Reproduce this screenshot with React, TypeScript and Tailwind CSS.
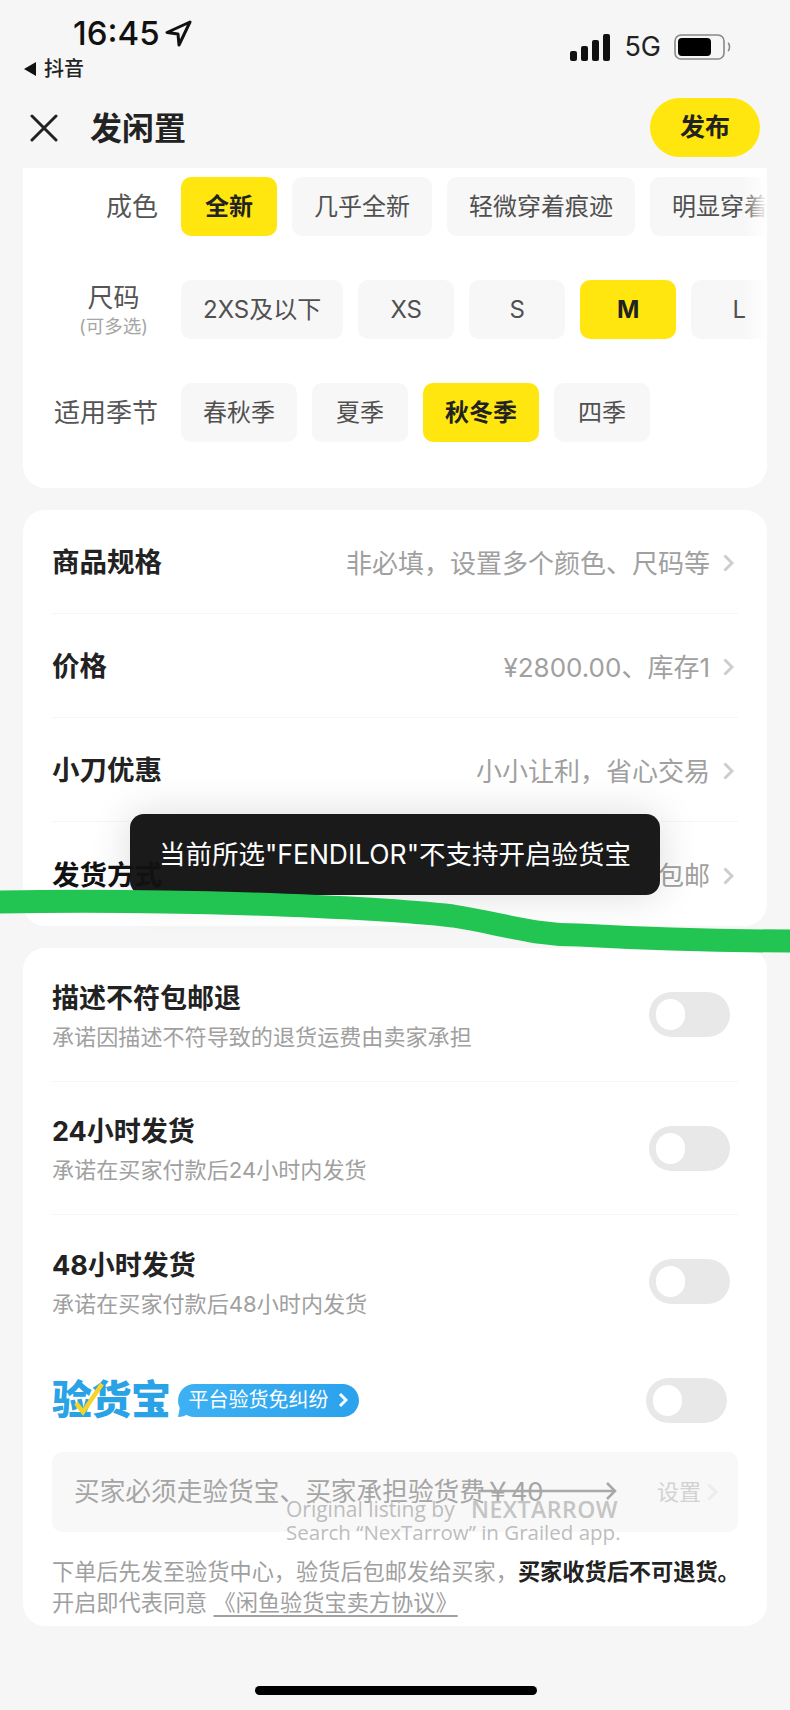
const cjk = "font-['Inter','Noto_Sans_CJK_SC',sans-serif]";

const Chip = ({ label, active }: { label: string; active?: boolean }) => (
	<div
		className={`h-[59px] min-w-[96px] px-[22px] shrink-0 rounded-[10px] flex items-center justify-center text-[24px] ${
			active ? "bg-[#ffe60f] text-[#222] font-bold" : "bg-[#f7f7f7] text-[#505050]"
		}`}
	>
		{label}
	</div>
);

const Chevron = ({ className = "stroke-[#cdcdcd]" }: { className?: string }) => (
	<svg width="11" height="18" viewBox="0 0 11 18" fill="none" className={`shrink-0 ${className}`} strokeWidth="3">
		<path d="M1.5 1.5l7.5 7.5-7.5 7.5" />
	</svg>
);

const SpecRow = ({ title, value, last }: { title: string; value: string; last?: boolean }) => (
	<div className={`h-[104px] pt-[3px] flex items-center justify-between ${last ? "" : "border-b border-[#f6f6f6]"}`}>
		<span className={`text-[27.5px] font-bold ${last ? "relative z-10 text-[#111]" : "text-[#222]"}`}>{title}</span>
		<span className="flex items-center gap-[13px] text-[26px] text-[#a0a0a0] pr-[4px]">
			{value}
			<Chevron />
		</span>
	</div>
);

const Toggle = () => (
	<div className="w-[81px] h-[45px] rounded-full bg-[#e8e8e8] flex items-center pl-[7px] shrink-0">
		<div className="w-[29px] h-[31px] rounded-full bg-white" />
	</div>
);

const PromiseRow = ({ title, sub, first, last }: { title: string; sub: string; first?: boolean; last?: boolean }) => (
	<div
		className={`flex items-center justify-between pr-[8px] ${first ? "h-[134px]" : "h-[133px]"} ${
			last ? "" : "border-b border-[#f6f6f6]"
		}`}
	>
		<div className="flex flex-col gap-[7px] pt-[5px]">
			<span className="text-[27px] leading-[32px] font-bold text-[#222]">{title}</span>
			<span className="text-[22.1px] leading-[30px] text-[#a0a0a0]">{sub}</span>
		</div>
		<Toggle />
	</div>
);

const Fade = () => <div className="absolute right-0 top-0 h-full w-[24px] bg-gradient-to-r from-white/0 to-white" />;

export default function App() {
	return (
		<div className={`relative w-[790px] h-[1710px] overflow-hidden bg-[#f6f6f6] ${cjk}`}>
			{/* status bar */}
			<div className="h-[98px] flex justify-between pl-[24px] pr-[58px] pt-[14px]">
				<div>
					<div className="flex items-center gap-[5px] pl-[49px] h-[38px]">
						<span className="text-[33px] leading-[38px] font-medium text-[#111] font-['Inter',sans-serif]">16:45</span>
						<svg width="27" height="27" viewBox="0 0 27 27" fill="none" stroke="#111" strokeWidth="3" strokeLinejoin="round">
							<path d="M25 2L2 12.5l11 1.5 1 11z" />
						</svg>
					</div>
					<div className="flex items-center gap-[8px] mt-[5px] text-[20px] leading-[24px] text-[#222] font-medium">
						<svg width="12" height="14" viewBox="0 0 12 14" fill="#111">
							<path d="M12 0v14L0 7z" />
						</svg>
						抖音
					</div>
				</div>
				<div className="flex items-center gap-[13px] h-[50px] self-start mt-[8px]">
					<svg width="41" height="27" viewBox="0 0 41 27" fill="#111">
						<rect x="0" y="17" width="7" height="10" rx="2" />
						<rect x="11" y="12" width="7" height="15" rx="2" />
						<rect x="22" y="6" width="7" height="21" rx="2" />
						<rect x="33" y="0" width="7" height="27" rx="2" />
					</svg>
					<span className="text-[27px] text-[#222] font-['Inter',sans-serif]">5G</span>
					<svg width="58" height="26" viewBox="0 0 58 26" fill="none">
						<rect x="1" y="1" width="49" height="24" rx="6" stroke="#888" strokeWidth="1.6" />
						<rect x="4" y="4" width="33" height="18" rx="4" fill="#000" />
						<path d="M54 9c2 1 2 7 0 8" stroke="#888" strokeWidth="1.6" />
					</svg>
				</div>
			</div>

			{/* header */}
			<div className="h-[70px] pb-[11px] flex items-center justify-between pl-[30px] pr-[30px]">
				<div className="flex items-center gap-[32px]">
					<svg width="28" height="28" viewBox="0 0 28 28" stroke="#222" strokeWidth="3" strokeLinecap="round">
						<path d="M2 2l24 24M26 2L2 26" />
					</svg>
					<span className="text-[32px] pt-[3px] font-bold text-[#222]">发闲置</span>
				</div>
				<div className="w-[110px] h-[59px] rounded-full bg-[#ffe60f] flex items-center justify-center text-[25px] font-bold text-[#222]">
					发布
				</div>
			</div>

			{/* condition card */}
			<div className="mx-[23px] h-[320px] bg-white rounded-b-[22px] pt-[9px] flex flex-col gap-[44px]">
				<div className="flex items-center">
					<div className="w-[135px] shrink-0 text-right text-[26px] text-[#555]">成色</div>
					<div className="relative ml-[23px] w-[586px] overflow-hidden flex gap-[15px]">
						<Chip label="全新" active />
						<Chip label="几乎全新" />
						<Chip label="轻微穿着痕迹" />
						<Chip label="明显穿着痕迹" />
						<Fade />
					</div>
				</div>
				<div className="flex items-center">
					<div className="w-[135px] shrink-0 flex flex-col items-center pl-[46px] text-[26px] leading-[32px] text-[#555]">
						尺码
						<span className="text-[18.5px] leading-[24px] text-[#a5a5a5] whitespace-nowrap">(可多选)</span>
					</div>
					<div className="relative ml-[23px] w-[586px] overflow-hidden flex gap-[15px]">
						<Chip label="2XS及以下" />
						<Chip label="XS" />
						<Chip label="S" />
						<Chip label="M" active />
						<Chip label="L" />
						<Fade />
					</div>
				</div>
				<div className="flex items-center">
					<div className="w-[135px] shrink-0 text-right text-[26px] text-[#555]">适用季节</div>
					<div className="ml-[23px] flex gap-[15px]">
						<Chip label="春秋季" />
						<Chip label="夏季" />
						<Chip label="秋冬季" active />
						<Chip label="四季" />
					</div>
				</div>
			</div>

			{/* spec card */}
			<div className="mx-[23px] mt-[22px] bg-white rounded-[22px] px-[29px]">
				<SpecRow title="商品规格" value="非必填，设置多个颜色、尺码等" />
				<SpecRow title="价格" value="¥2800.00、库存1" />
				<SpecRow title="小刀优惠" value="小小让利，省心交易" />
				<SpecRow title="发货方式" value="包邮" last />
			</div>

			{/* promises card */}
			<div className="mx-[23px] mt-[22px] h-[678px] bg-white rounded-[22px] px-[29px]">
				<PromiseRow first title="描述不符包邮退" sub="承诺因描述不符导致的退货运费由卖家承担" />
				<PromiseRow title="24小时发货" sub="承诺在买家付款后24小时内发货" />
				<PromiseRow last title="48小时发货" sub="承诺在买家付款后48小时内发货" />
				<div className="h-[104px] flex items-center justify-between pr-[11px]">
					<div className="flex items-center gap-[7px]">
						<span className="relative text-[40px] leading-[44px] font-black text-[#2aa2e6] whitespace-nowrap tracking-[-0.5px]">
							验货宝
							<svg width="32" height="34" viewBox="0 0 32 34" fill="none" className="absolute left-[21px] top-[4px]">
								<path d="M3 21l7 9L29 2" stroke="#f5d327" strokeWidth="4.5" />
							</svg>
						</span>
						<span className="relative flex items-center gap-[9px] h-[33px] rounded-full bg-gradient-to-r from-[#3db1f3] to-[#2aa2ec] pl-[11px] pr-[11px] text-[20px] text-white whitespace-nowrap">
							<svg width="10" height="10" viewBox="0 0 10 10" fill="#3db1f3" className="absolute left-0 bottom-0">
								<path d="M2 0L0 10c4 0 7-1 10-3z" />
							</svg>
							平台验货免纠纷
							<svg width="10" height="16" viewBox="0 0 10 16" fill="none" stroke="#fff" strokeWidth="3">
								<path d="M2 2l6 6-6 6" />
							</svg>
						</span>
					</div>
					<Toggle />
				</div>
				<div className="h-[80px] rounded-[10px] bg-[#f8f8f8] flex items-center justify-between pl-[22px] pr-[20px]">
					<span className="text-[25.7px] text-[#a5a5a5]">买家必须走验货宝、买家承担验货费￥40</span>
					<span className="flex items-center gap-[6px] text-[22px] text-[#d2d2d2]">
						设置
						<Chevron className="stroke-[#ececec]" />
					</span>
				</div>
				<p className="mt-[24px] text-[22.2px] leading-[31px] text-[#a0a0a0] whitespace-nowrap">
					下单后先发至验货中心，验货后包邮发给买家，<span className="font-bold text-[#222]">买家收货后不可退货。</span>
					<br />
					开启即代表同意 <span className="underline underline-offset-4">《闲鱼验货宝卖方协议》</span>
				</p>
			</div>

			{/* home indicator */}
			<div className="absolute left-[255px] top-[1686px] w-[282px] h-[9px] rounded-full bg-black" />

			{/* toast */}
			<div className="absolute left-[130px] top-[814px] w-[530px] h-[81px] rounded-[14px] bg-[#1a1a1a] shadow-[0_0_40px_rgba(0,0,0,0.14)] flex items-center justify-center text-[26.5px] text-white">
				当前所选"FENDILOR"不支持开启验货宝
			</div>

			{/* marker line */}
			<svg width="790" height="70" viewBox="0 0 790 70" fill="none" className="absolute left-0 top-[885px] z-20">
				<path d="M-5 17C100 15 190 17 252 19C340 22 400 25 453 31C500 38 530 50 579 50C650 54 730 56 795 56" stroke="#22c552" strokeWidth="23" />
			</svg>

			{/* watermark */}
			<div className="absolute left-[286px] top-[1480px] w-[332px] font-['Open_Sans',sans-serif] text-[#bdbdbd]">
				<svg width="140" height="22" viewBox="0 0 140 22" fill="none" stroke="#a8a8a8" strokeWidth="2.5" className="ml-[192px]">
					<path d="M0 11h136M129 3l8 8-8 8" />
				</svg>
				<div className="flex items-center justify-between h-[22px] leading-[22px] -mt-[4px]">
					<span className="text-[21px] whitespace-nowrap">Original listing by</span>
					<span className="text-[23px] font-semibold tracking-[0.5px] text-[#c4c4c4]">NEXTARROW</span>
				</div>
				<div className="text-[20.5px] leading-[24px] whitespace-nowrap">Search “NexTarrow” in Grailed app.</div>
			</div>
		</div>
	);
}
